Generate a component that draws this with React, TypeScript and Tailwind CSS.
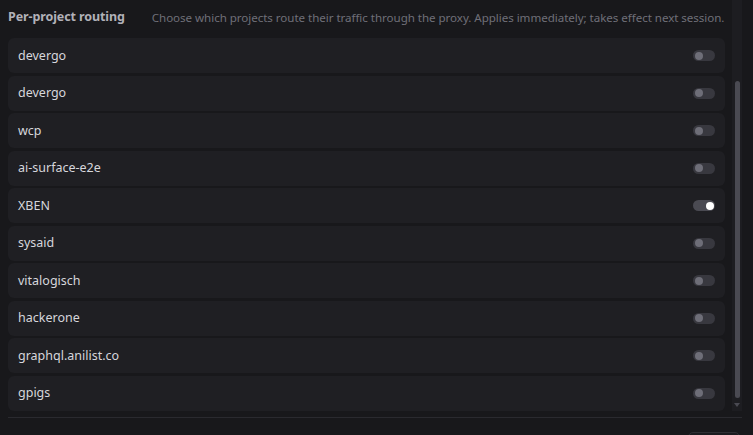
const projects: { name: string; on: boolean }[] = [
  { name: 'devergo', on: false },
  { name: 'devergo', on: false },
  { name: 'wcp', on: false },
  { name: 'ai-surface-e2e', on: false },
  { name: 'XBEN', on: true },
  { name: 'sysaid', on: false },
  { name: 'vitalogisch', on: false },
  { name: 'hackerone', on: false },
  { name: 'graphql.anilist.co', on: false },
  { name: 'gpigs', on: false },
]

function Toggle({ on }: { on: boolean }) {
  return (
    <div
      className={`w-[22px] h-[11px] rounded-full flex items-center px-[1.5px] ${
        on ? 'bg-[#4a4a52] justify-end' : 'bg-[#38383f] justify-start'
      }`}
    >
      <div className={`w-[8px] h-[8px] rounded-full ${on ? 'bg-white' : 'bg-[#6e6e78]'}`} />
    </div>
  )
}

export default function App() {
  return (
    <div
      className="w-[753px] h-[435px] overflow-hidden bg-[#18181b] flex flex-col"
      style={{ fontFamily: '"Noto Sans", "Open Sans", sans-serif' }}
    >
      <div className="flex h-[411px] shrink-0">
        <div className="flex-1 pl-2 pr-[7px] flex flex-col">
          {/* header */}
          <div className="h-[37px] flex items-center gap-[27px] pb-[2px]">
            <span className="text-[12.5px] font-bold text-[#b1b1b8] tracking-[-0.1px]">Per-project routing</span>
            <span className="text-[11.6px] text-[#6f6f78] tracking-[-0.05px]">
              Choose which projects route their traffic through the proxy. Applies immediately; takes effect next session.
            </span>
          </div>

          <div className="flex flex-col gap-[2.5px] pt-[1px]">
            {projects.map((p, i) => (
              <div
                key={i}
                className="h-[35px] rounded-[6px] bg-[#1f1f23] flex items-center justify-between pl-[10px] pr-[10px]"
              >
                <span className="text-[12.5px] text-[#d6d6dc] pt-[1px]">{p.name}</span>
                <Toggle on={p.on} />
              </div>
            ))}
          </div>
        </div>

        {/* scrollbar */}
        <div className="w-[10px] bg-[#1d1d21] flex flex-col items-center mr-[11px]">
          <div className="h-[81px]" />
          <div className="w-[5px] h-[317px] rounded-full bg-[#4a4a52]" />
          <div className="flex-1 flex items-center justify-center">
            <svg width="6" height="4" viewBox="0 0 6 4">
              <path d="M0 0 L6 0 L3 4 Z" fill="#4a4a52" />
            </svg>
          </div>
        </div>
      </div>

      {/* footer */}
      <div className="pl-2 pr-[11px] pt-[6px]">
        <div className="h-px bg-[#2a2a2f]" />
      </div>
      <div className="flex justify-end pr-[13px] pt-[14px]">
        <div className="w-[52px] h-[20px] rounded-[5px] border border-[#2e2e33] bg-[#1b1b1f]" />
      </div>
    </div>
  )
}
